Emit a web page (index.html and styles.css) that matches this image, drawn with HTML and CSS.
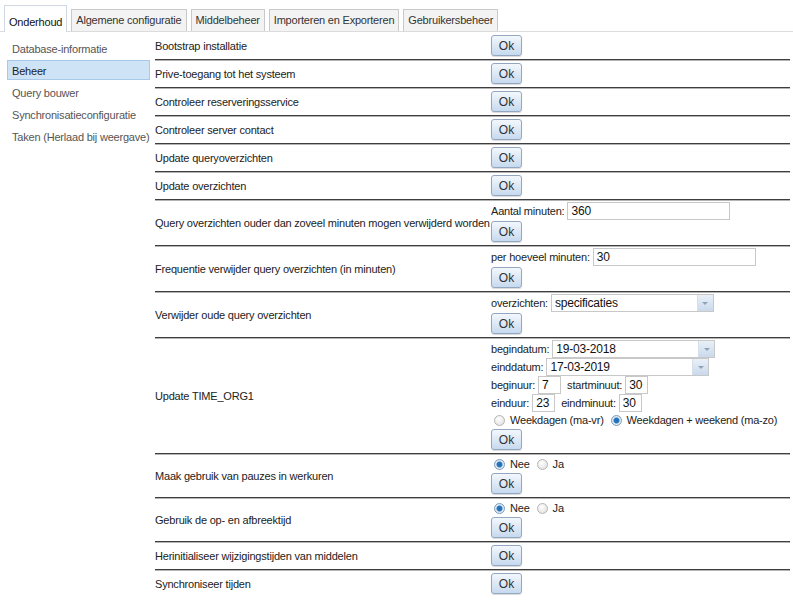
FILE: index.html
```html
<!DOCTYPE html>
<html lang="nl">
<head>
    <meta charset="UTF-8">
    <title>Onderhoud</title>
    <link rel="stylesheet" href="styles.css">
</head>
<body>
    <div class="tabs">
        <a class="tab active">Onderhoud</a>
        <a class="tab">Algemene configuratie</a>
        <a class="tab">Middelbeheer</a>
        <a class="tab">Importeren en Exporteren</a>
        <a class="tab">Gebruikersbeheer</a>
    </div>

    <div class="page">
        <ul class="side">
            <li>Database-informatie</li>
            <li class="selected">Beheer</li>
            <li>Query bouwer</li>
            <li>Synchronisatieconfiguratie</li>
            <li>Taken (Herlaad bij weergave)</li>
        </ul>

        <table class="grid">
            <colgroup>
                <col class="col-label">
                <col>
            </colgroup>
            <tr>
                <td class="label">Bootstrap installatie</td>
                <td class="ctrl"><button class="ok">Ok</button></td>
            </tr>
            <tr>
                <td class="label">Prive-toegang tot het systeem</td>
                <td class="ctrl"><button class="ok">Ok</button></td>
            </tr>
            <tr>
                <td class="label">Controleer reserveringsservice</td>
                <td class="ctrl"><button class="ok">Ok</button></td>
            </tr>
            <tr>
                <td class="label">Controleer server contact</td>
                <td class="ctrl"><button class="ok">Ok</button></td>
            </tr>
            <tr>
                <td class="label">Update queryoverzichten</td>
                <td class="ctrl"><button class="ok">Ok</button></td>
            </tr>
            <tr>
                <td class="label">Update overzichten</td>
                <td class="ctrl"><button class="ok">Ok</button></td>
            </tr>
            <tr>
                <td class="label">Query overzichten ouder dan zoveel minuten mogen verwijderd worden</td>
                <td class="ctrl">
                    <div class="field">Aantal minuten: <input class="text wide" value="360"></div>
                    <button class="ok">Ok</button>
                </td>
            </tr>
            <tr>
                <td class="label">Frequentie verwijder query overzichten (in minuten)</td>
                <td class="ctrl">
                    <div class="field">per hoeveel minuten: <input class="text wide" value="30"></div>
                    <button class="ok">Ok</button>
                </td>
            </tr>
            <tr>
                <td class="label">Verwijder oude query overzichten</td>
                <td class="ctrl">
                    <div class="field">overzichten:
                        <span class="combo"><input class="combo-input" value="specificaties"><span class="arrow"></span></span>
                    </div>
                    <button class="ok">Ok</button>
                </td>
            </tr>
            <tr>
                <td class="label">Update TIME_ORG1</td>
                <td class="ctrl">
                    <div class="field">begindatum:
                        <span class="combo"><input class="combo-input" value="19-03-2018"><span class="arrow"></span></span>
                    </div>
                    <div class="field">einddatum:
                        <span class="combo"><input class="combo-input" value="17-03-2019"><span class="arrow"></span></span>
                    </div>
                    <div class="field">beginuur: <input class="text short" value="7"> <span class="sub">startminuut:</span> <input class="text short" value="30"></div>
                    <div class="field">einduur: <input class="text short" value="23"> <span class="sub">eindminuut:</span> <input class="text short" value="30"></div>
                    <div class="radios">
                        <label><input type="radio" name="dagen"> Weekdagen (ma-vr)</label>
                        <label><input type="radio" name="dagen" checked> Weekdagen + weekend (ma-zo)</label>
                    </div>
                    <button class="ok">Ok</button>
                </td>
            </tr>
            <tr>
                <td class="label">Maak gebruik van pauzes in werkuren</td>
                <td class="ctrl">
                    <div class="radios">
                        <label><input type="radio" name="pauzes" checked> Nee</label>
                        <label><input type="radio" name="pauzes"> Ja</label>
                    </div>
                    <button class="ok">Ok</button>
                </td>
            </tr>
            <tr>
                <td class="label">Gebruik de op- en afbreektijd</td>
                <td class="ctrl">
                    <div class="radios">
                        <label><input type="radio" name="afbreek" checked> Nee</label>
                        <label><input type="radio" name="afbreek"> Ja</label>
                    </div>
                    <button class="ok">Ok</button>
                </td>
            </tr>
            <tr>
                <td class="label">Herinitialiseer wijzigingstijden van middelen</td>
                <td class="ctrl"><button class="ok">Ok</button></td>
            </tr>
            <tr>
                <td class="label">Synchroniseer tijden</td>
                <td class="ctrl"><button class="ok">Ok</button></td>
            </tr>
        </table>
    </div>
</body>
</html>
```

FILE: styles.css
```css
:root {
    --text-primary: #222222;
    --text-secondary: #555555;
    --tab-border: #c9c9c9;
    --input-border: #c8c8c8;
    --selected-bg: #cfe3f7;
    --selected-border: #a9c9ea;
}

body {
    font-family: 'Liberation Sans', Arial, sans-serif;
    font-size: 11px;
    letter-spacing: -0.2px;
    margin: 0;
    padding: 0;
    background-color: #ffffff;
    color: var(--text-primary);
}

.tabs {
    display: flex;
    align-items: flex-end;
    gap: 4px;
    padding: 4px 0 0 4px;
    border-bottom: 1px solid #dcdcdc;
    height: 27px;
}

.tab {
    display: block;
    height: 21px;
    line-height: 21px;
    padding: 0 4px;
    border: 1px solid var(--tab-border);
    border-bottom: none;
    background-color: #f3f3f3;
    color: #333333;
    cursor: pointer;
}

.tab.active {
    height: 26px;
    line-height: 32px;
    margin-bottom: -1px;
    background-color: #ffffff;
    border-color: #cfd8e3;
    color: #111111;
}

.page {
    display: flex;
    align-items: flex-start;
    gap: 5px;
    padding-left: 7px;
}

.side {
    list-style: none;
    margin: 0;
    padding: 6px 0 0 0;
    width: 143px;
    flex-shrink: 0;
}

.side li {
    height: 20px;
    line-height: 20px;
    margin-bottom: 2px;
    padding-left: 4px;
    border: 1px solid transparent;
    color: var(--text-secondary);
    box-sizing: border-box;
    white-space: nowrap;
}

.side li.selected {
    background-color: var(--selected-bg);
    border-color: var(--selected-border);
    color: var(--text-primary);
}

.grid {
    width: 635px;
    table-layout: fixed;
    border-collapse: separate;
    border-spacing: 0;
}

.col-label {
    width: 335px;
}

.grid td {
    border-bottom: 1px solid #3e3e3e;
    border-top: 1px solid #b4b4b4;
    vertical-align: middle;
}

.grid tr:first-child td {
    border-top-color: transparent;
}

.grid tr:last-child td {
    border-bottom-color: transparent;
}

.label {
    padding: 0 2px 0 0;
    white-space: nowrap;
}

.ctrl {
    padding: 1px 0 3px 1px;
    white-space: nowrap;
}

.field {
    display: flex;
    align-items: center;
    gap: 3px;
    height: 18px;
}

.field .sub {
    margin-left: 3px;
}

.text {
    box-sizing: border-box;
    height: 18px;
    border: 1px solid var(--input-border);
    padding: 0 3px;
    font-family: inherit;
    font-size: 12px;
    letter-spacing: -0.2px;
    color: #111111;
    outline: none;
}

.text.wide {
    width: 163px;
}

.text.short {
    width: 23px;
}

.combo {
    display: inline-flex;
    box-sizing: border-box;
    height: 18px;
    width: 163px;
    border: 1px solid var(--input-border);
}

.combo-input {
    flex: 1;
    min-width: 0;
    border: none;
    padding: 0 3px;
    font-family: inherit;
    font-size: 12px;
    letter-spacing: -0.2px;
    color: #111111;
    outline: none;
}

.arrow {
    width: 15px;
    flex-shrink: 0;
    border-left: 1px solid #d6e0ea;
    background: linear-gradient(#e9f0f8, #c9d9ec);
    display: flex;
    align-items: center;
    justify-content: center;
}

.arrow::after {
    content: '';
    border-left: 3px solid transparent;
    border-right: 3px solid transparent;
    border-top: 3px solid #8fa3b8;
}

.radios {
    display: flex;
    align-items: center;
    gap: 7px;
    height: 16px;
    padding-left: 3px;
}

.radios label {
    display: flex;
    align-items: center;
    gap: 5px;
    color: var(--text-primary);
}

.radios input {
    appearance: none;
    width: 11px;
    height: 11px;
    margin: 0;
    border: 1px solid #b5b5b5;
    border-radius: 50%;
    background: radial-gradient(circle at 40% 35%, #ffffff, #dcdcdc);
}

.radios input:checked {
    border-color: #7c9cbc;
    background: radial-gradient(circle, #1e6cb4 0, #2a78c0 2.5px, #e4ecf4 3.5px, #cfd9e4 100%);
}

.ok {
    display: block;
    margin-top: 1px;
    width: 31px;
    height: 21px;
    padding: 0;
    border: 1px solid #93a8c0;
    border-radius: 3px;
    background: linear-gradient(#f3f7fc, #c7daef);
    box-shadow: 0 1px 1px rgba(0, 0, 0, 0.15);
    font-family: inherit;
    font-size: 12px;
    color: #333333;
    letter-spacing: 0;
    cursor: pointer;
}
```
